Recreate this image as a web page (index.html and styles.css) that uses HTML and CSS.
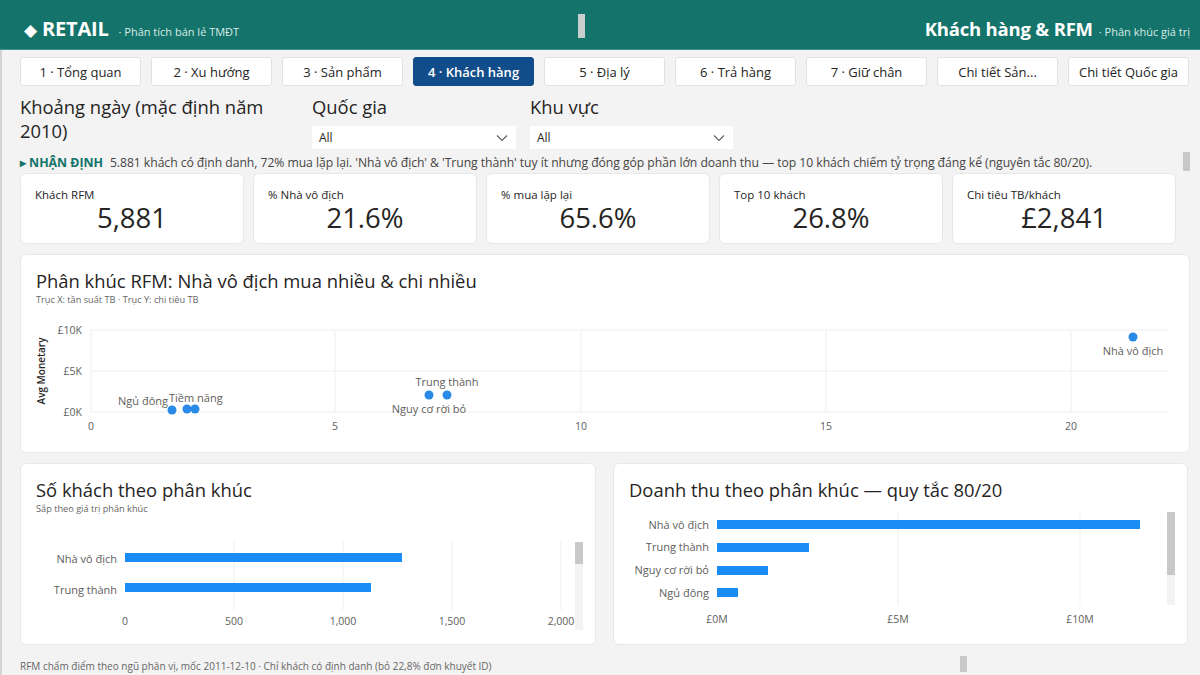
FILE: index.html
```html
<!DOCTYPE html>
<html lang="vi">
<head>
<meta charset="utf-8">
<title>RETAIL · Khách hàng & RFM</title>
<link rel="stylesheet" href="styles.css">
</head>
<body>
<header class="topbar">
  <div class="brand"><span class="diamond">◆</span><span class="brand-name">RETAIL</span><span class="brand-sub">· Phân tích bán lẻ TMĐT</span></div>
  <div class="grip"></div>
  <div class="page-title"><span class="pt-main">Khách hàng &amp; RFM</span><span class="pt-sub">· Phân khúc giá trị</span></div>
</header>
<main class="main">
  <nav class="tabs">
    <div class="tab">1 · Tổng quan</div>
    <div class="tab">2 · Xu hướng</div>
    <div class="tab">3 · Sản phẩm</div>
    <div class="tab active">4 · Khách hàng</div>
    <div class="tab">5 · Địa lý</div>
    <div class="tab">6 · Trả hàng</div>
    <div class="tab">7 · Giữ chân</div>
    <div class="tab">Chi tiết Sản...</div>
    <div class="tab">Chi tiết Quốc gia</div>
  </nav>

  <section class="filters">
    <div class="filter f-date"><div class="f-label">Khoảng ngày (mặc định năm 2010)</div></div>
    <div class="filter f-country">
      <div class="f-label">Quốc gia</div>
      <div class="select"><span>All</span><svg width="12" height="8" viewBox="0 0 12 8"><path d="M1 1.5 L6 6.5 L11 1.5" fill="none" stroke="#605e5c" stroke-width="1.1"/></svg></div>
    </div>
    <div class="filter f-region">
      <div class="f-label">Khu vực</div>
      <div class="select"><span>All</span><svg width="12" height="8" viewBox="0 0 12 8"><path d="M1 1.5 L6 6.5 L11 1.5" fill="none" stroke="#605e5c" stroke-width="1.1"/></svg></div>
    </div>
  </section>

  <div class="insight">
    <span class="ins-tag">▸ NHẬN ĐỊNH</span>
    <span class="ins-text">5.881 khách có định danh, 72% mua lặp lại. 'Nhà vô địch' &amp; 'Trung thành' tuy ít nhưng đóng góp phần lớn doanh thu — top 10 khách chiếm tỷ trọng đáng kể (nguyên tắc 80/20).</span>
    <div class="thumb ins-thumb"></div>
  </div>

  <section class="kpis">
    <div class="kpi"><div class="kpi-label">Khách RFM</div><div class="kpi-value">5,881</div></div>
    <div class="kpi"><div class="kpi-label">% Nhà vô địch</div><div class="kpi-value">21.6%</div></div>
    <div class="kpi"><div class="kpi-label">% mua lặp lại</div><div class="kpi-value">65.6%</div></div>
    <div class="kpi"><div class="kpi-label">Top 10 khách</div><div class="kpi-value">26.8%</div></div>
    <div class="kpi"><div class="kpi-label">Chi tiêu TB/khách</div><div class="kpi-value">£2,841</div></div>
  </section>

  <section class="card scatter-card">
    <div class="card-head">
      <div class="card-title">Phân khúc RFM: Nhà vô địch mua nhiều &amp; chi nhiều</div>
      <div class="card-sub">Trục X: tần suất TB · Trục Y: chi tiêu TB</div>
    </div>
    <svg class="chart" width="1170" height="140" viewBox="0 0 1170 140">
      <g class="grid">
        <line x1="70" y1="21" x2="1148" y2="21"/>
        <line x1="70" y1="62" x2="1148" y2="62"/>
        <line x1="70" y1="103" x2="1148" y2="103"/>
        <line x1="70" y1="21" x2="70" y2="103"/>
        <line x1="314" y1="21" x2="314" y2="103"/>
        <line x1="560" y1="21" x2="560" y2="103"/>
        <line x1="805" y1="21" x2="805" y2="103"/>
        <line x1="1050" y1="21" x2="1050" y2="103"/>
      </g>
      <g class="tick" text-anchor="end">
        <text x="61" y="25">£10K</text>
        <text x="61" y="66">£5K</text>
        <text x="61" y="107">£0K</text>
      </g>
      <g class="tick" text-anchor="middle">
        <text x="70" y="121">0</text>
        <text x="314" y="121">5</text>
        <text x="560" y="121">10</text>
        <text x="805" y="121">15</text>
        <text x="1050" y="121">20</text>
      </g>
      <text class="axis-title" transform="translate(24 62) rotate(-90)" text-anchor="middle">Avg Monetary</text>
      <g class="pts">
        <circle cx="151" cy="101" r="4.5"/>
        <circle cx="166" cy="100" r="4.5"/>
        <circle cx="174" cy="100" r="4.5"/>
        <circle cx="408" cy="86" r="4.5"/>
        <circle cx="426" cy="86" r="4.5"/>
        <circle cx="1112" cy="28" r="4.5"/>
      </g>
      <g class="plabel">
        <text x="147" y="96" text-anchor="end">Ngủ đông</text>
        <text x="148" y="93">Tiềm năng</text>
        <text x="426" y="77" text-anchor="middle">Trung thành</text>
        <text x="408" y="104" text-anchor="middle">Nguy cơ rời bỏ</text>
        <text x="1112" y="46" text-anchor="middle">Nhà vô địch</text>
      </g>
    </svg>
  </section>

  <section class="row2">
    <div class="card bar-card">
      <div class="card-head">
        <div class="card-title">Số khách theo phân khúc</div>
        <div class="card-sub">Sắp theo giá trị phân khúc</div>
      </div>
      <svg class="chart" width="576" height="105" viewBox="0 0 576 105">
        <g class="grid">
          <line x1="213" y1="8" x2="213" y2="78"/>
          <line x1="322" y1="8" x2="322" y2="78"/>
          <line x1="431" y1="8" x2="431" y2="78"/>
          <line x1="540" y1="8" x2="540" y2="78"/>
        </g>
        <g class="bars">
          <rect x="104" y="21" width="277" height="9"/>
          <rect x="104" y="51" width="246" height="9"/>
        </g>
        <g class="blabel" text-anchor="end">
          <text x="96" y="31">Nhà vô địch</text>
          <text x="96" y="62">Trung thành</text>
        </g>
        <g class="tick" text-anchor="middle">
          <text x="104" y="93">0</text>
          <text x="213" y="93">500</text>
          <text x="322" y="93">1,000</text>
          <text x="431" y="93">1,500</text>
          <text x="540" y="93">2,000</text>
        </g>
        <rect class="track" x="554" y="10" width="8" height="88"/>
        <rect class="thumbbar" x="554" y="10" width="8" height="22"/>
      </svg>
    </div>
    <div class="card bar-card">
      <div class="card-head">
        <div class="card-title">Doanh thu theo phân khúc — quy tắc 80/20</div>
      </div>
      <svg class="chart" width="575" height="120" viewBox="0 0 575 120">
        <g class="grid">
          <line x1="284" y1="2" x2="284" y2="95"/>
          <line x1="466" y1="2" x2="466" y2="95"/>
        </g>
        <g class="bars">
          <rect x="103" y="10" width="423" height="9"/>
          <rect x="103" y="33" width="92" height="9"/>
          <rect x="103" y="56" width="51" height="9"/>
          <rect x="103" y="78" width="21" height="9"/>
        </g>
        <g class="blabel" text-anchor="end">
          <text x="95" y="19">Nhà vô địch</text>
          <text x="95" y="41">Trung thành</text>
          <text x="95" y="64">Nguy cơ rời bỏ</text>
          <text x="95" y="87">Ngủ đông</text>
        </g>
        <g class="tick" text-anchor="middle">
          <text x="103" y="113">£0M</text>
          <text x="284" y="113">£5M</text>
          <text x="466" y="113">£10M</text>
        </g>
        <rect class="track" x="553" y="2" width="8" height="93"/>
        <rect class="thumbbar" x="553" y="2" width="8" height="63"/>
      </svg>
    </div>
  </section>

  <footer class="foot">
    <span>RFM chấm điểm theo ngũ phân vị, mốc 2011-12-10 · Chỉ khách có định danh (bỏ 22,8% đơn khuyết ID)</span>
    <div class="thumb foot-thumb"></div>
  </footer>
</main>
</body>
</html>
```

FILE: styles.css
```css
* { box-sizing: border-box; }
html, body { margin: 0; padding: 0; }
body {
  width: 1200px;
  height: 675px;
  overflow: hidden;
  background: #f3f3f3;
  font-family: "Open Sans", "Noto Sans", sans-serif;
  color: #252423;
}

/* header */
.topbar {
  position: relative;
  height: 50px;
  background: #14736a;
  border-bottom: 1px solid #3f978c;
  display: flex;
  align-items: center;
  justify-content: space-between;
  padding: 8px 10px 0 24px;
  color: #fff;
}
.brand { display: flex; align-items: baseline; }
.diamond { font-size: 17px; margin-right: 5px; }
.brand-name { font-size: 20px; font-weight: 700; letter-spacing: -0.2px; }
.brand-sub { font-size: 11px; margin-left: 10px; color: #d8ece9; }
.grip {
  position: absolute;
  left: 578px;
  top: 14px;
  width: 7px;
  height: 24px;
  background: #c9cfce;
}
.page-title { display: flex; align-items: baseline; }
.pt-main { font-size: 18.5px; font-weight: 700; letter-spacing: -0.2px; }
.pt-sub { font-size: 11px; margin-left: 6px; color: #d8ece9; }

/* main */
.main {
  height: 625px;
  border-left: 2px solid #d4d4d4;
  padding-left: 18px;
}

.tabs {
  display: flex;
  gap: 10px;
  padding-top: 7px;
}
.tab {
  width: 121px;
  height: 29px;
  background: #fff;
  border: 1px solid #e2e2e2;
  border-radius: 3px;
  font-size: 13px;
  display: flex;
  align-items: center;
  justify-content: center;
  color: #252423;
  white-space: nowrap;
}
.tab.active {
  background: #124d8b;
  border-color: #124d8b;
  color: #fff;
  font-weight: 600;
}

/* filters */
.filters {
  display: flex;
  height: 66px;
  padding-top: 9px;
}
.filter { display: flex; flex-direction: column; }
.f-date { width: 292px; }
.f-country { width: 218px; }
.f-region { width: 204px; }
.f-label {
  font-size: 18.4px;
  line-height: 24px;
  color: #252423;
}
.f-date .f-label { width: 270px; }
.select {
  margin-top: 7px;
  width: 204px;
  height: 23px;
  background: #fff;
  display: flex;
  align-items: center;
  justify-content: space-between;
  padding: 0 8px 0 7px;
  font-size: 12px;
  color: #252423;
}
.f-region .select { width: 203px; }

/* insight */
.insight {
  position: relative;
  height: 21px;
  display: flex;
  align-items: center;
  font-size: 12.2px;
  letter-spacing: -0.05px;
  white-space: nowrap;
}
.ins-tag { color: #14736a; font-weight: 700; margin-right: 7px; font-size: 12.4px; }
.ins-text { color: #484644; }
.thumb { position: absolute; background: #c8c8c8; width: 7px; }
.ins-thumb { left: 1163px; top: 0; height: 19px; }

/* KPI cards */
.kpis { display: flex; gap: 9px; margin-top: 0; }
.kpi {
  width: 224px;
  height: 71px;
  background: #fff;
  border: 1px solid #e8e8e8;
  border-radius: 6px;
  padding: 13px 0 0 14px;
}
.kpi-label { font-size: 11.5px; line-height: 16px; color: #252423; }
.kpi-value {
  font-size: 27.5px;
  line-height: 30px;
  text-align: center;
  padding-right: 14px;
  color: #252423;
}

/* cards */
.card {
  background: #fff;
  border: 1px solid #e8e8e8;
  border-radius: 6px;
  overflow: hidden;
}
.card-head { padding: 14px 0 0 15px; }
.card-title { font-size: 18.4px; line-height: 24px; color: #252423; }
.card-sub { font-size: 9.2px; line-height: 12px; color: #666; margin-top: 1px; }
.chart { display: block; }

.scatter-card { width: 1170px; height: 199px; margin-top: 10px; }
.scatter-card .chart { margin-top: 3px; }

.row2 { display: flex; gap: 17px; margin-top: 10px; }
.bar-card { width: 576px; height: 182px; }
.row2 .bar-card:first-child .chart { margin-top: 17px; }
.row2 .bar-card:last-child { width: 575px; }
.row2 .bar-card:last-child .chart { margin-top: 8px; }

/* svg styling */
.grid line { stroke: #efefef; stroke-width: 1; }
.tick text { font-size: 10.5px; fill: #605e5c; font-family: "Open Sans", sans-serif; }
.axis-title { font-size: 10px; fill: #252423; font-weight: 600; font-family: "Open Sans", sans-serif; }
.pts circle { fill: #2a8ae8; }
.plabel text { font-size: 11px; fill: #605e5c; font-family: "Open Sans", sans-serif; }
.bars rect { fill: #1a8cf3; }
.blabel text { font-size: 11px; fill: #605e5c; font-family: "Open Sans", sans-serif; }
.track { fill: #f3f3f3; }
.thumbbar { fill: #c8c8c8; }

/* footer */
.foot {
  position: relative;
  height: 30px;
  display: flex;
  align-items: center;
  padding-top: 12px;
  font-size: 10px;
  color: #666;
}
.foot-thumb { left: 940px; top: 11px; height: 16px; }
```
